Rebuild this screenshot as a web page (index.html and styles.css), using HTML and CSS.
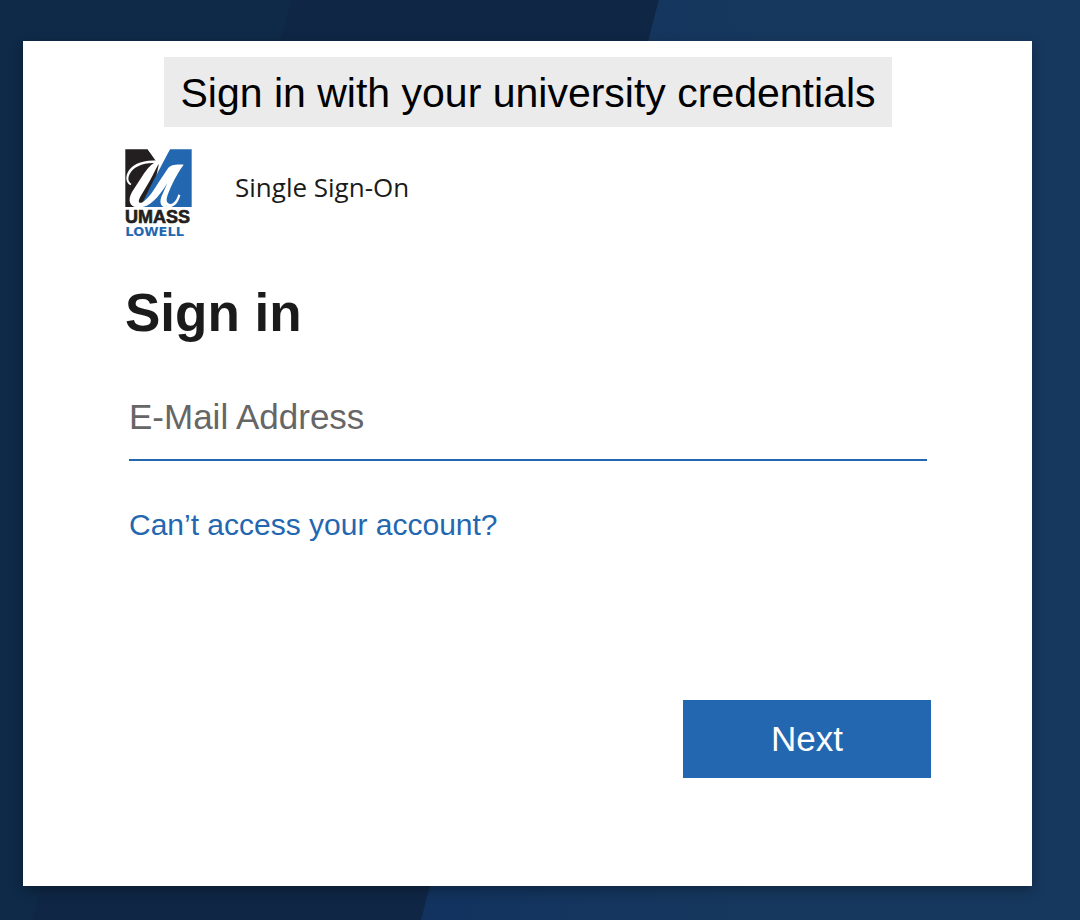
FILE: index.html
```html
<!DOCTYPE html>
<html lang="en">
<head>
<meta charset="utf-8">
<meta name="viewport" content="width=device-width, initial-scale=1">
<title>Sign in</title>
<link rel="stylesheet" href="styles.css">
</head>
<body class="page">
<main class="card">
  <p class="banner">Sign in with your university credentials</p>
  <div class="content">
    <header class="brand">
      <svg class="logo" viewBox="30 27 210 276" role="img" aria-label="UMass Lowell">
        <path fill="#231f20" d="M31 28H98L131 75L105 201H31Z"/>
        <path fill="#2467b1" d="M165 28H230V201H76L112 128Z"/>
        <path fill="#fff" d="M98 28H165L132 72Z"/>
        <path fill="#fff" d="M47 136C31 128 30 107 43 89C59 69 90 60 136 61C127 79 117 99 104 123L76 170C66 188 74 194 88 183C103 171 116 152 131 127L157 88C164 77 176 73 206 74C194 90 181 111 168 140C157 165 151 181 158 188C169 199 184 186 190 163L196 166C190 190 176 203 158 203C139 203 132 190 139 170L157 130C131 171 105 203 71 203C43 203 37 180 51 156L82 108C96 88 105 76 117 69C83 68 53 82 43 104C38 116 40 125 49 131Z"/>
        <text class="logo-name" x="30" y="249">UMASS</text>
        <text class="logo-place" x="31" y="287">LOWELL</text>
      </svg>
      <span class="product">Single Sign-On</span>
    </header>
    <h1 class="title">Sign in</h1>
    <form class="form">
      <input class="email" type="email" aria-label="E-Mail Address" placeholder="E-Mail Address">
      <a class="help" href="#">Can’t access your account?</a>
      <button class="next" type="submit">Next</button>
    </form>
  </div>
</main>
</body>
</html>
```

FILE: styles.css
```css
* { box-sizing: border-box; }

.page {
  position: relative;
  min-height: 100vh;
  margin: 0;
  padding: 41px 48px 34px 23px;
  background: #0e2a48;
  font-family: "Liberation Sans", Arial, sans-serif;
  color: #1b1b1b;
}

/* Slanted background bands */
.page::before,
.page::after {
  content: "";
  position: absolute;
  inset: 0;
  z-index: -1;
}
.page::before {
  background: #0f2745;
  clip-path: polygon(27% 0, 100% 0, 100% 100%, 3% 100%);
}
.page::after {
  background: linear-gradient(90deg, #12335f 40%, #16385e 70%);
  clip-path: polygon(61% 0, 100% 0, 100% 100%, 39% 100%);
}

.card {
  display: flex;
  flex-direction: column;
  min-height: calc(100vh - 75px);
  padding: 16px 101px 108px 102px;
  background: #fff;
  box-shadow: 0 4px 12px rgba(0, 0, 0, 0.3);
}

.banner {
  align-self: center;
  margin: 0;
  padding: 13px 16px 11px;
  background: #ebebeb;
  color: #000;
  font-size: 41px;
  line-height: 46px;
}

.content,
.form {
  display: flex;
  flex: 1;
  flex-direction: column;
}
.content { padding-top: 22px; }

.brand {
  display: flex;
  align-items: flex-start;
  gap: 40px;
}
.logo {
  width: 70px;
  height: 92px;
}
.logo-name {
  fill: #231f20;
  stroke: #231f20;
  stroke-width: 2px;
  font-size: 54px;
  font-weight: bold;
}
.logo-place {
  fill: #2467b1;
  font-family: "DejaVu Sans", sans-serif;
  font-size: 39px;
  font-weight: bold;
}
.product {
  padding-top: 20px;
  font-family: "Open Sans", sans-serif;
  font-size: 26px;
  line-height: 36px;
}

.title {
  margin: 40px 0 0;
  font-size: 53px;
  line-height: 64px;
}

.form { padding: 24px 0 0 4px; }
.email {
  width: calc(100% - 4px);
  height: 92px;
  padding: 6px 0 0;
  border: 0;
  border-bottom: 2px solid #2467b1;
  border-radius: 0;
  outline: 0;
  background: transparent;
  color: #1b1b1b;
  font: 35px "Liberation Sans", Arial, sans-serif;
}
.email::placeholder {
  color: #666;
  opacity: 1;
}
.help {
  align-self: flex-start;
  margin-top: 46px;
  color: #2467b1;
  font-size: 30px;
  line-height: 36px;
  text-decoration: none;
}
.next {
  align-self: flex-end;
  width: 248px;
  height: 78px;
  margin-top: auto;
  border: 0;
  background: #2467b1;
  color: #fff;
  font: 35px "Liberation Sans", Arial, sans-serif;
}
```
